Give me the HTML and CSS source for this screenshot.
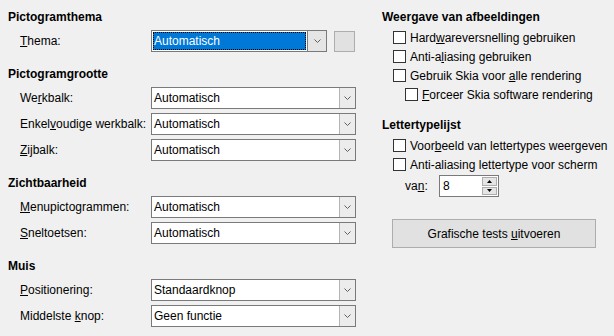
FILE: index.html
```html
<!DOCTYPE html>
<html>
<head>
<meta charset="utf-8">
<link rel="stylesheet" href="styles.css">
</head>
<body>
<div class="page">
  <div class="col left">
    <section class="sec">
      <h3 class="hd">Pictogramthema</h3>
      <div class="rows">
        <div class="row">
          <span class="lbl"><u>T</u>hema:</span>
          <div class="thema">
            <div class="combo focus">
              <span class="val"><span class="sel">Automatisch</span></span>
              <span class="btn"><svg width="7" height="4" viewBox="0 0 7 4"><polyline points="0.5,0.5 3.5,3.5 6.5,0.5" fill="none" stroke="#606060" stroke-width="1"/></svg></span>
            </div>
            <div class="sq"></div>
          </div>
        </div>
      </div>
    </section>
    <section class="sec">
      <h3 class="hd">Pictogramgrootte</h3>
      <div class="rows">
        <div class="row">
          <span class="lbl">We<u>r</u>kbalk:</span>
          <div class="combo"><span class="val">Automatisch</span><span class="btn"><svg width="7" height="4" viewBox="0 0 7 4"><polyline points="0.5,0.5 3.5,3.5 6.5,0.5" fill="none" stroke="#606060" stroke-width="1"/></svg></span></div>
        </div>
        <div class="row">
          <span class="lbl">Enkel<u>v</u>oudige werkbalk:</span>
          <div class="combo"><span class="val">Automatisch</span><span class="btn"><svg width="7" height="4" viewBox="0 0 7 4"><polyline points="0.5,0.5 3.5,3.5 6.5,0.5" fill="none" stroke="#606060" stroke-width="1"/></svg></span></div>
        </div>
        <div class="row">
          <span class="lbl"><u>Z</u>ijbalk:</span>
          <div class="combo"><span class="val">Automatisch</span><span class="btn"><svg width="7" height="4" viewBox="0 0 7 4"><polyline points="0.5,0.5 3.5,3.5 6.5,0.5" fill="none" stroke="#606060" stroke-width="1"/></svg></span></div>
        </div>
      </div>
    </section>
    <section class="sec">
      <h3 class="hd">Zichtbaarheid</h3>
      <div class="rows">
        <div class="row">
          <span class="lbl"><u>M</u>enupictogrammen:</span>
          <div class="combo"><span class="val">Automatisch</span><span class="btn"><svg width="7" height="4" viewBox="0 0 7 4"><polyline points="0.5,0.5 3.5,3.5 6.5,0.5" fill="none" stroke="#606060" stroke-width="1"/></svg></span></div>
        </div>
        <div class="row">
          <span class="lbl"><u>S</u>neltoetsen:</span>
          <div class="combo"><span class="val">Automatisch</span><span class="btn"><svg width="7" height="4" viewBox="0 0 7 4"><polyline points="0.5,0.5 3.5,3.5 6.5,0.5" fill="none" stroke="#606060" stroke-width="1"/></svg></span></div>
        </div>
      </div>
    </section>
    <section class="sec">
      <h3 class="hd">Muis</h3>
      <div class="rows">
        <div class="row">
          <span class="lbl"><u>P</u>ositionering:</span>
          <div class="combo"><span class="val">Standaardknop</span><span class="btn"><svg width="7" height="4" viewBox="0 0 7 4"><polyline points="0.5,0.5 3.5,3.5 6.5,0.5" fill="none" stroke="#606060" stroke-width="1"/></svg></span></div>
        </div>
        <div class="row">
          <span class="lbl">Middelste <u>k</u>nop:</span>
          <div class="combo"><span class="val">Geen functie</span><span class="btn"><svg width="7" height="4" viewBox="0 0 7 4"><polyline points="0.5,0.5 3.5,3.5 6.5,0.5" fill="none" stroke="#606060" stroke-width="1"/></svg></span></div>
        </div>
      </div>
    </section>
  </div>
  <div class="col right">
    <section class="rsec">
      <h3 class="hd">Weergave van afbeeldingen</h3>
      <div class="checks">
        <div class="chk"><span class="box"></span><span>Hard<u>w</u>areversnelling gebruiken</span></div>
        <div class="chk"><span class="box"></span><span>Anti-a<u>l</u>iasing gebruiken</span></div>
        <div class="chk"><span class="box"></span><span>Gebruik Skia voor <u>a</u>lle rendering</span></div>
        <div class="chk sub"><span class="box"></span><span><u>F</u>orceer Skia software rendering</span></div>
      </div>
    </section>
    <section class="rsec">
      <h3 class="hd">Lettertypelijst</h3>
      <div class="checks">
        <div class="chk"><span class="box"></span><span>Voor<u>b</u>eeld van lettertypes weergeven</span></div>
        <div class="chk"><span class="box"></span><span>Anti-aliasin<u>g</u> lettertype voor scherm</span></div>
        <div class="van">
          <span class="vlbl">va<u>n</u>:</span>
          <div class="spin">
            <span class="sval">8</span>
            <span class="sbtns">
              <span class="sb"><svg width="5" height="3" viewBox="0 0 5 3"><polygon points="2.5,0 5,3 0,3" fill="#000"/></svg></span>
              <span class="sb"><svg width="5" height="3" viewBox="0 0 5 3"><polygon points="0,0 5,0 2.5,3" fill="#000"/></svg></span>
            </span>
          </div>
        </div>
      </div>
    </section>
    <div class="pbtn"><span>Grafische tests <u>u</u>itvoeren</span></div>
  </div>
</div>
</body>
</html>
```

FILE: styles.css
```css
html, body {
  margin: 0;
  padding: 0;
  background: #f0f0f0;
}
body {
  font-family: "Liberation Sans", Arial, sans-serif;
  font-size: 12px;
  color: #000;
  width: 614px;
  height: 336px;
  overflow: hidden;
}
u {
  text-decoration: underline;
  text-underline-offset: 1px;
}
.page {
  display: flex;
  padding: 10px 0 0 8px;
}
.col {
  display: flex;
  flex-direction: column;
}
.left {
  width: 374px;
  gap: 15px;
}
.hd {
  margin: 0;
  font-size: 12px;
  font-weight: bold;
  height: 14px;
  line-height: 14px;
}
.sec {
  display: flex;
  flex-direction: column;
  gap: 6px;
}
.rows {
  display: flex;
  flex-direction: column;
  gap: 4px;
  padding-left: 12px;
}
.row {
  display: flex;
  align-items: center;
  height: 22px;
}
.lbl {
  width: 131px;
  flex: none;
  white-space: nowrap;
}
.combo {
  width: 205px;
  height: 22px;
  box-sizing: border-box;
  border: 1px solid #7a7a7a;
  background: #fff;
  display: flex;
}
.val {
  flex: 1;
  padding-left: 2px;
  line-height: 20px;
  white-space: nowrap;
  overflow: hidden;
}
.btn {
  width: 16px;
  flex: none;
  box-sizing: border-box;
  background: #ececec;
  border-left: 1px solid #b4b4b4;
  display: flex;
  align-items: center;
  justify-content: center;
}
.thema {
  display: flex;
  gap: 7px;
  align-items: center;
}
.combo.focus {
  width: 176px;
  border-color: #7a7a7a;
}
.combo.focus .val {
  padding: 1px;
  display: flex;
}
.sel {
  flex: 1;
  background: #0078d7;
  color: #fff;
  outline: 1px dotted #000;
  outline-offset: -1px;
  line-height: 18px;
  padding-left: 1px;
}
.combo.focus .btn {
  width: 19px;
  background: #e5e5e5;
  border-left: 1px solid #7a7a7a;
}
.sq {
  width: 21px;
  height: 21px;
  box-sizing: border-box;
  background: #e1e1e1;
  border: 1px solid #adadad;
}
.right {
  width: 230px;
}
.rsec {
  display: flex;
  flex-direction: column;
  gap: 4px;
}
.rsec + .rsec {
  margin-top: 14px;
}
.checks {
  display: flex;
  flex-direction: column;
  padding-left: 11px;
}
.chk {
  display: flex;
  align-items: center;
  height: 19px;
  gap: 4px;
  white-space: nowrap;
}
.chk.sub {
  padding-left: 12px;
}
.box {
  width: 13px;
  height: 13px;
  box-sizing: border-box;
  border: 1px solid #333;
  background: #fff;
  flex: none;
}
.van {
  display: flex;
  align-items: center;
  height: 22px;
  margin-top: 1px;
  padding-left: 12px;
}
.vlbl {
  width: 34px;
}
.spin {
  width: 60px;
  height: 22px;
  box-sizing: border-box;
  border: 1px solid #7a7a7a;
  background: #fff;
  display: flex;
}
.sval {
  flex: 1;
  padding-left: 3px;
  line-height: 20px;
}
.sbtns {
  width: 15px;
  display: flex;
  flex-direction: column;
  padding: 1px 1px 1px 0;
  gap: 1px;
}
.sb {
  flex: 1;
  background: #e5e5e5;
  border: 1px solid #adadad;
  display: flex;
  align-items: center;
  justify-content: center;
}
.pbtn {
  margin-top: 22px;
  margin-left: 10px;
  width: 204px;
  height: 29px;
  box-sizing: border-box;
  background: #e1e1e1;
  border: 1px solid #adadad;
  display: flex;
  align-items: center;
  justify-content: center;
}
```
